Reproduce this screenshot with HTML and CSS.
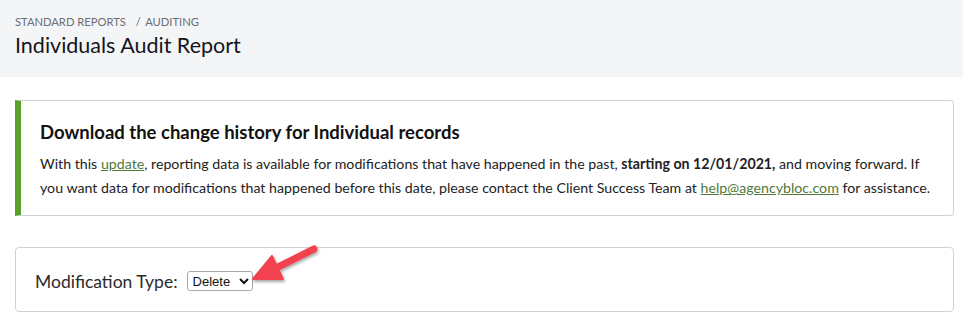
FILE: index.html
```html
<!DOCTYPE html>
<html>
<head>
  <title>Individuals Audit Report</title>
  <link rel="stylesheet" href="styles.css">
</head>
<body>
  <header class="page-header">
    <div class="breadcrumb">
      <span>Standard Reports</span>
      <span class="crumb-sep">/</span>
      <span>Auditing</span>
    </div>
    <h1>Individuals Audit Report</h1>
  </header>

  <div class="content">
    <div class="notice">
      <h2>Download the change history for Individual records</h2>
      <p>With this <a href="#">update</a>, reporting data is available for modifications that have happened in the past, <strong>starting on 12/01/2021,</strong> and moving forward. If you want data for modifications that happened before this date, please contact the Client Success Team at <a href="#">help@agencybloc.com</a> for assistance.</p>
    </div>

    <div class="filter-card">
      <label for="mod-type">Modification Type:</label>
      <select id="mod-type">
        <option>Delete</option>
        <option>Update</option>
        <option>Create</option>
      </select>
      <!-- annotation arrow -->
      <svg class="callout-arrow" width="80" height="46" viewBox="0 0 80 46">
        <defs>
          <filter id="arrow-shadow" x="-20%" y="-20%" width="150%" height="150%">
            <feDropShadow dx="1" dy="2" stdDeviation="1.5" flood-color="#000" flood-opacity="0.35"/>
          </filter>
        </defs>
        <g filter="url(#arrow-shadow)" fill="#f2434f" stroke="#f2434f" stroke-linejoin="round">
          <line x1="68" y1="6" x2="26" y2="27" stroke-width="7" stroke-linecap="round"/>
          <polygon points="7,36 26,13 37,36" stroke-width="2"/>
        </g>
      </svg>
    </div>
  </div>
</body>
</html>
```

FILE: styles.css
```css
body {
  margin: 0;
  font-family: Lato, "Open Sans", sans-serif;
  color: #222;
  background: #fff;
}

.page-header {
  background-color: #f4f5f7;
  padding: 14px 15px 18px;
  height: 45px;
}

.breadcrumb {
  font-size: 11.2px;
  color: #6b6e78;
  text-transform: uppercase;
  line-height: 15px;
}

.crumb-sep {
  margin: 0 2px 0 7px;
}

h1 {
  margin: 2px 0 0;
  font-size: 21.5px;
  font-weight: normal;
  color: #14151a;
  line-height: 28px;
}

.content {
  padding: 23px 9px 0 15px;
}

.notice {
  border: 1px solid #cfd1d6;
  border-left: 6px solid #5aa12b;
  border-radius: 0 4px 4px 0;
  padding: 20px 18px 15px 19px;
}

.notice h2 {
  margin: 0 0 9px;
  font-size: 18.5px;
  font-weight: bold;
  color: #111;
}

.notice p {
  margin: 0;
  font-size: 14.2px;
  line-height: 24px;
  color: #222;
}

.notice a {
  color: #4f7a3a;
  text-decoration: underline;
}

.filter-card {
  position: relative;
  margin-top: 31px;
  border: 1px solid #cfd1d6;
  border-radius: 4px;
  padding: 23px 19px 20px;
  display: flex;
  align-items: center;
  height: 20px;
}

.filter-card label {
  font-size: 17.5px;
  color: #2b2b2b;
  margin-right: 9px;
}

.filter-card select {
  font-family: Arial, "Liberation Sans", sans-serif;
  font-size: 13px;
  height: 20px;
  padding: 0 1px;
  border: 1px solid #a9a9a9;
  border-radius: 3px;
  background: #fff;
  color: #111;
}

.callout-arrow {
  position: absolute;
  left: 230px;
  top: -5px;
}
```
